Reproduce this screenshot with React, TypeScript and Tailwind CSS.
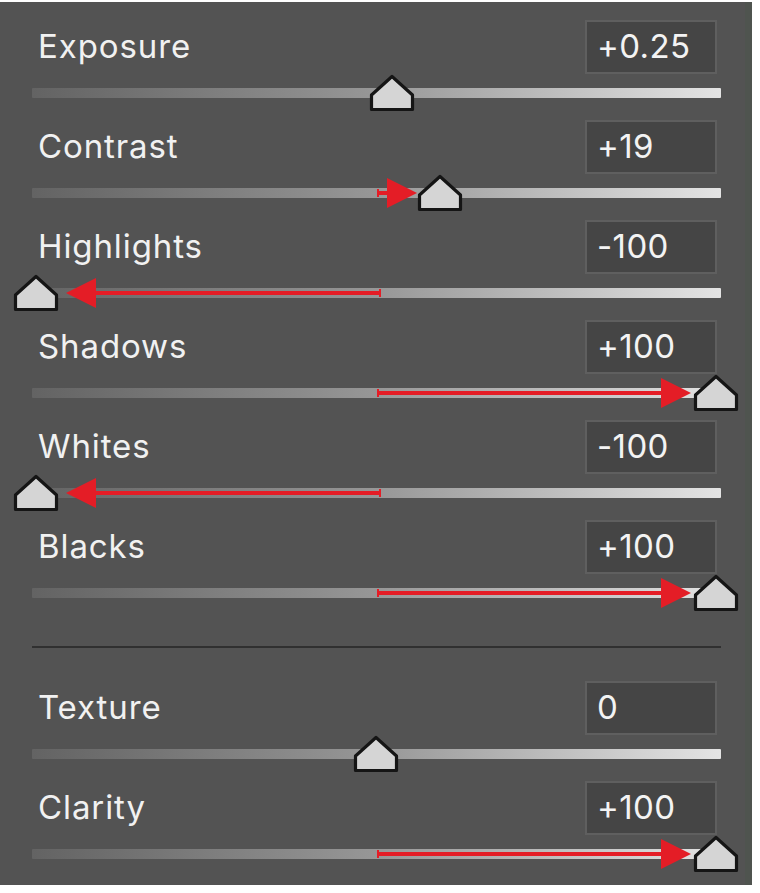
import React from 'react'

interface ISlider {
  label: string
  value: string
  thumb: number
  arrow?: { from: number; to: number }
}

const basic: ISlider[] = [
  { label: 'Exposure', value: '+0.25', thumb: 360 },
  { label: 'Contrast', value: '+19', thumb: 408, arrow: { from: 346, to: 385 } },
  { label: 'Highlights', value: '-100', thumb: 4, arrow: { from: 348, to: 34 } },
  { label: 'Shadows', value: '+100', thumb: 684, arrow: { from: 346, to: 659 } },
  { label: 'Whites', value: '-100', thumb: 4, arrow: { from: 348, to: 34 } },
  { label: 'Blacks', value: '+100', thumb: 684, arrow: { from: 346, to: 659 } },
]

const presence: ISlider[] = [
  { label: 'Texture', value: '0', thumb: 344 },
  { label: 'Clarity', value: '+100', thumb: 684, arrow: { from: 346, to: 659 } },
]

function Thumb({ x }: { x: number }) {
  return (
    <svg
      width="46"
      height="38"
      viewBox="0 0 46 38"
      className="absolute top-[-14px]"
      style={{ left: x - 23 }}
    >
      <polygon
        points="23,2.5 43.5,21 43.5,35.5 2.5,35.5 2.5,21"
        fill="#d5d5d5"
        stroke="#151515"
        strokeWidth="3.2"
        strokeLinejoin="round"
      />
    </svg>
  )
}

function Arrow({ from, to }: { from: number; to: number }) {
  const dir = to > from ? 1 : -1
  const base = to - dir * 30
  return (
    <svg width="689" height="40" className="absolute left-0 top-[-15px] overflow-visible">
      <line x1={from} y1="20" x2={base} y2="20" stroke="#e41d26" strokeWidth="4" />
      <line x1={from} y1="16" x2={from} y2="24" stroke="#e41d26" strokeWidth="2" />
      <polygon points={`${to},20 ${base},5 ${base},35`} fill="#e41d26" />
    </svg>
  )
}

function SliderRow({ item }: { item: ISlider }) {
  return (
    <div className="pb-[22px]">
      <div className="flex h-[54px] items-center justify-between">
        <span className="pl-[6px] text-[33px] tracking-[0.9px] text-[#f1f1f1]">{item.label}</span>
        <div className="mr-[4px] flex h-[54px] w-[132px] items-center border-2 border-[#5f5f5f] bg-[#454545] pl-[10px] text-[33px] tracking-[0.4px] text-[#f3f3f3]">
          {item.value}
        </div>
      </div>
      <div className="relative mt-[14px] h-[10px] rounded-[1px] bg-gradient-to-r from-[#636363] via-[#979797] to-[#e4e4e4]">
        {item.arrow && <Arrow from={item.arrow.from} to={item.arrow.to} />}
        <Thumb x={item.thumb} />
      </div>
    </div>
  )
}

export default function App() {
  return (
    <div className="h-[893px] w-[760px] overflow-hidden bg-white">
      <div
        className="mt-[2px] h-[883px] w-[752px] border-r-[7px] border-[#4f544f] bg-[#535353] pl-[32px] pr-[24px] pt-[18px]"
        style={{ fontFamily: 'Inter, "Liberation Sans", sans-serif' }}
      >
        {basic.map((item) => (
          <SliderRow key={item.label} item={item} />
        ))}
        <div className="mb-[33px] mt-[26px] h-[2px] bg-[#303030]" />
        {presence.map((item) => (
          <SliderRow key={item.label} item={item} />
        ))}
      </div>
    </div>
  )
}
